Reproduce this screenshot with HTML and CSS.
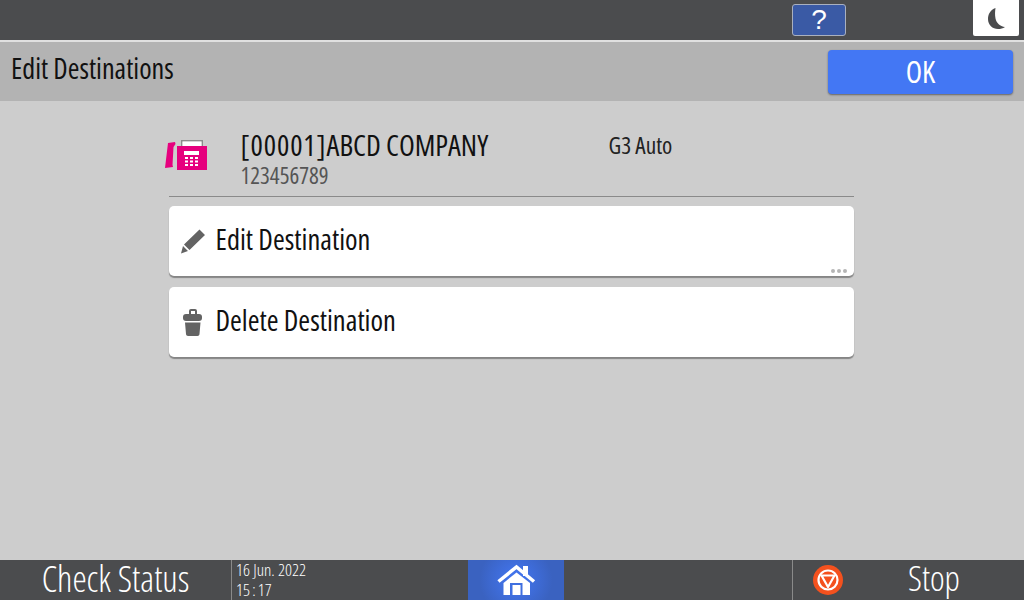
FILE: index.html
```html
<!DOCTYPE html>
<html lang="en">
<head>
<meta charset="utf-8">
<title>Edit Destinations</title>
<link rel="stylesheet" href="styles.css">
</head>
<body>
<div class="screen">
  <header class="topbar">
    <button class="help">?</button>
    <div class="moon">
      <svg width="22" height="24" viewBox="0 0 22 24"><path d="M10.500 2C5.500 4 3 8 3 13c0 6 4.500 10 10 10 2.500 0 5-.5 7-2-5-.5-8.500-4-9.500-8.500C9.800 9 10 5 10.500 2z" fill="#4a4b4d"/></svg>
    </div>
  </header>
  <div class="titlebar">
    <h1 class="title">Edit Destinations</h1>
    <button class="ok">OK</button>
  </div>
  <main class="content">
    <div class="panel">
      <div class="dest">
        <svg class="fax" width="44" height="34" viewBox="0 0 44 34">
          <path d="M3 4 10 3 10.500 5 8.500 8 7.500 26 8 28 0 29z" fill="#e6007e"/>
          <path d="M16 1h22v6h-1.500V2.500h-19V7H16z" fill="#8c8c8c"/>
          <path d="M17.500 2.500h19V7h-19z" fill="#fff"/>
          <path d="M12 7h30v24H12z" fill="#e6007e"/>
          <path d="M19 12h15v4H19z" fill="#fff"/>
          <path d="M20 18h3v2h-3zM25 18h3v2h-3zM30 18h3v2h-3zM20 21.500h3v2h-3zM25 21.500h3v2h-3zM30 21.500h3v2h-3zM20 25h3v2h-3zM25 25h3v2h-3zM30 25h3v2h-3z" fill="#fff"/>
        </svg>
        <div class="names">
          <div class="name"><span class="code">[00001]</span>ABCD COMPANY</div>
          <div class="number">123456789</div>
        </div>
        <div class="mode">G3 Auto</div>
      </div>
      <button class="action">
        <svg class="act-icon" width="26" height="26" viewBox="0 0 26 26"><path d="M19.500 1.500 25 7 9.500 22 4 16.500zM3 18l5 5-7 2.500z" fill="#636363"/></svg>
        <span class="label">Edit Destination</span>
        <span class="dots"><i></i><i></i><i></i></span>
      </button>
      <button class="action">
        <svg class="act-icon" width="26" height="28" viewBox="0 0 26 28"><path d="M9 6V3q0-2 2-2h4q2 0 2 2v3h-2V3h-4v3z" fill="#636363"/><rect x="3" y="6" width="19" height="7" rx="3" fill="#636363"/><path d="M5 14.500h15.500L19.500 26c0 1-1 2-2 2H8c-1 0-2-1-2-2z" fill="#636363"/></svg>
        <span class="label">Delete Destination</span>
      </button>
    </div>
  </main>
  <footer class="footer">
    <div class="check">Check Status</div>
    <div class="clock"><span>16 Jun. 2022</span><span class="time">15 : 17</span></div>
    <div class="home">
      <svg width="40" height="32" viewBox="0 0 40 32">
        <path d="M27 2h5v10h-5z" fill="#fff"/>
        <path d="M2.500 17.500 20.500 3 38 17.500" fill="none" stroke="#fff" stroke-width="3.500"/>
        <path d="M7.500 19 20.500 8.500 34 19v12H7.500z" fill="#fff"/>
        <path d="M14 19h12.500v12H14z" fill="#3f6fe0"/>
        <path d="M16.500 21h8v10h-8z" fill="#fff"/>
      </svg>
    </div>
    <div class="stop">
      <svg class="stop-icon" width="30" height="30" viewBox="0 0 30 30"><circle cx="15" cy="15" r="15" fill="#f4511e"/><circle cx="15" cy="15" r="9.500" fill="none" stroke="#fff" stroke-width="2.200"/><path d="M8.500 10.500h13L15 22z" fill="none" stroke="#fff" stroke-width="2.200" stroke-linejoin="round"/></svg>
      <span class="stop-label">Stop</span>
    </div>
  </footer>
</div>
</body>
</html>
```
FILE: styles.css
```css
* { box-sizing: border-box; }
html, body { margin: 0; padding: 0; }
body { font-family: "Open Sans", sans-serif; font-stretch: 75%; font-weight: 400; }
button { font: inherit; font-stretch: 75%; border: 0; padding: 0; }
.screen { width: 1024px; height: 600px; display: flex; flex-direction: column; background: #cdcdcd; overflow: hidden; }

.topbar { height: 40px; background: #4b4c4e; display: flex; justify-content: flex-end; padding-right: 5px; flex: none; }
.help { width: 54px; height: 32px; margin: 4px 127px 0 0; background: #3a5aa5; border: 1px solid #a9b0bf; border-radius: 3px; color: #fff; font-family: "Liberation Sans", sans-serif; font-size: 28px; font-weight: 400; line-height: 28px; }
.moon { width: 46px; height: 36px; background: #fff; border-radius: 0 0 2px 2px; display: flex; align-items: center; justify-content: center; }

.titlebar { height: 61px; border-top: 2px solid #e0e0e0; background: #b3b3b3; display: flex; align-items: center; justify-content: space-between; padding: 0 11px; flex: none; }
.title { margin: 0 0 7px; font-size: 28.200px; font-weight: 400; color: #111; }
.ok { width: 185px; height: 44px; margin-top: 1px; padding-bottom: 2px; background: #4377f4; color: #fff; font-size: 30px; border-radius: 4px; box-shadow: 0 1px 2px rgba(0,0,0,.45); }

.content { flex: 1; display: flex; justify-content: center; }
.panel { width: 685px; margin-left: -2px; }
.dest { height: 96px; border-bottom: 1px solid #8a8a8a; display: flex; align-items: flex-start; padding-top: 26px; }
.fax { margin: 12px 0 0 -4px; flex: none; }
.names { margin-left: 32px; width: 368px; }
.name { font-size: 29px; line-height: 35px; color: #111; white-space: nowrap; }
.code { letter-spacing: .9px; }
.number { font-size: 23px; line-height: 26px; color: #555; }
.mode { font-size: 23.300px; line-height: 36px; color: #222; }

.action { width: 100%; height: 70px; margin-top: 9px; background: #fff; border-radius: 5px; box-shadow: 0 2px 1px rgba(0,0,0,.35); display: flex; align-items: center; gap: 10px; padding: 0 0 0 11px; font-size: 28.500px; color: #111; position: relative; text-align: left; }
.action + .action { margin-top: 11px; }
.act-icon { flex: none; }
.label { margin-bottom: 5px; }
.dots { position: absolute; right: 7px; bottom: 3px; display: flex; gap: 2px; }
.dots i { width: 4px; height: 4px; border-radius: 50%; background: #b5b5b5; }

.footer { height: 40px; background: #4b4c4e; display: flex; color: #fff; flex: none; font-weight: 350; }
.check { width: 232px; font-size: 36px; line-height: 37px; text-align: center; border-right: 1px solid #8a8a8a; }
.clock { width: 236px; display: flex; flex-direction: column; font-size: 17.200px; line-height: 20px; padding: 0 0 0 4px; }
.time { word-spacing: -1px; }
.home { width: 96px; background: radial-gradient(circle at center, #4377f4, #3a62c0 70%); display: flex; justify-content: center; align-items: flex-start; padding-top: 4px; }
.stop { margin-left: 228px; flex: 1; border-left: 1px solid #8a8a8a; display: flex; align-items: center; padding-left: 20px; }
.stop-icon { flex: none; }
.stop-label { font-size: 35px; margin: 0 0 4px 65px; line-height: 38px; }
```
